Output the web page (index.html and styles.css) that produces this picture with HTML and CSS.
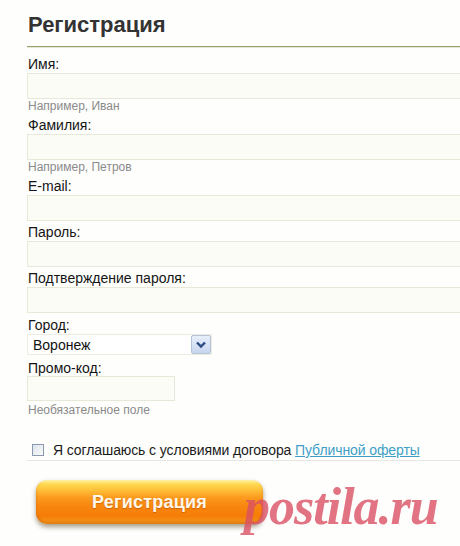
FILE: index.html
```html
<!DOCTYPE html>
<html lang="ru">
<head>
<meta charset="utf-8">
<title>Регистрация</title>
<link rel="stylesheet" href="styles.css">
</head>
<body>
<div class="page">
  <h1 class="title">Регистрация</h1>
  <form class="form">
    <label class="label">Имя:</label>
    <div class="input"></div>
    <div class="hint">Например, Иван</div>

    <label class="label">Фамилия:</label>
    <div class="input"></div>
    <div class="hint">Например, Петров</div>

    <label class="label">E-mail:</label>
    <div class="input input-gap"></div>

    <label class="label">Пароль:</label>
    <div class="input input-gap"></div>

    <label class="label">Подтверждение пароля:</label>
    <div class="input input-gap"></div>

    <label class="label label-city">Город:</label>
    <div class="select">
      <span class="select-value">Воронеж</span>
      <span class="select-btn">
        <svg width="12" height="8" viewBox="0 0 12 8"><path d="M2 1.5 L6 5.5 L10 1.5" fill="none" stroke="#2c4a86" stroke-width="2.4"/></svg>
      </span>
    </div>

    <label class="label label-promo">Промо-код:</label>
    <div class="input input-short"></div>
    <div class="hint hint-promo">Необязательное поле</div>

    <div class="agree">
      <span class="checkbox"></span>
      <span class="agree-text">Я соглашаюсь с условиями договора <a class="link" href="#">Публичной оферты</a></span>
    </div>

    <div class="submit-row">
      <div class="submit">Регистрация</div>
    </div>
  </form>
  <div class="watermark">postila.ru</div>
</div>
</body>
</html>
```
FILE: styles.css
```css
html, body {
  margin: 0;
  padding: 0;
  background: #fefefd;
}
body {
  width: 460px;
  height: 546px;
  overflow: hidden;
  font-family: "Liberation Sans", Arial, sans-serif;
  color: #1a1a1a;
}
.page {
  position: relative;
  padding-left: 27px;
  height: 546px;
  overflow: hidden;
}
.title {
  box-sizing: border-box;
  width: 433px;
  margin: 0;
  padding: 12px 0 8px 1px;
  font-size: 22px;
  line-height: 26px;
  font-weight: bold;
  color: #333;
  border-bottom: 1px solid #98a070;
  box-shadow: 0 1px 0 #e6e8d6;
}
.form {
  display: flex;
  flex-direction: column;
  align-items: flex-start;
  padding-top: 9px;
}
.label {
  display: block;
  font-size: 14px;
  line-height: 16px;
  padding-left: 1px;
  color: #141414;
  margin-bottom: 1px;
}
.input {
  box-sizing: border-box;
  width: 434px;
  height: 26px;
  border: 1px solid #e8e8d8;
  background: #fcfcf6;
}
.input-gap {
  margin-bottom: 3px;
}
.input-short {
  width: 148px;
  height: 25px;
}
.hint {
  font-size: 12px;
  line-height: 14px;
  color: #8a8a8a;
  padding-left: 1px;
  margin-bottom: 4px;
}
.hint-promo {
  margin-top: 2px;
  margin-bottom: 0;
}
.label-city {
  margin-top: 1px;
  margin-bottom: 1px;
}
.select {
  box-sizing: border-box;
  width: 185px;
  height: 21px;
  border: 1px solid #ececdf;
  background: #fff;
  display: flex;
  align-items: center;
  justify-content: space-between;
  margin-bottom: 5px;
}
.select-value {
  font-size: 14px;
  padding-left: 5px;
  color: #111;
}
.select-btn {
  box-sizing: border-box;
  width: 20px;
  height: 19px;
  border: 1px solid #b4c2da;
  border-radius: 2px;
  background: linear-gradient(#e8effa, #c6d5ee);
  display: flex;
  align-items: center;
  justify-content: center;
}
.label-promo {
  margin-bottom: 0;
}
.agree {
  box-sizing: border-box;
  display: flex;
  align-items: center;
  margin-top: 25px;
  padding: 0 0 2px 5px;
  border-bottom: 1px solid #e6e6e2;
  width: 433px;
  height: 19px;
}
.checkbox {
  box-sizing: border-box;
  width: 12px;
  height: 12px;
  border: 1px solid #8a9ab0;
  background: linear-gradient(135deg, #dde3ea, #fafbfc);
  margin-right: 9px;
}
.agree-text {
  font-size: 14px;
  line-height: 16px;
  color: #1a1a1a;
  letter-spacing: -0.1px;
}
.link {
  color: #3e9ec6;
  text-decoration: underline;
}
.submit-row {
  padding: 19px 0 0 9px;
}
.submit {
  width: 227px;
  height: 44px;
  border-radius: 11px;
  background: linear-gradient(#fff3a8 0%, #ffd84e 10%, #ffc23a 22%, #fb9a1e 40%, #f8860e 60%, #f57d08 82%, #f79c1e 100%);
  box-shadow: 0 3px 5px rgba(60, 40, 0, 0.45), inset 0 -2px 3px rgba(180, 80, 0, 0.4);
  color: #fff8ea;
  font-size: 18px;
  font-weight: bold;
  display: flex;
  align-items: center;
  justify-content: center;
  text-shadow: 0 1px 1px rgba(160, 70, 0, 0.5);
  letter-spacing: 0.2px;
}
.watermark {
  position: absolute;
  left: 244px;
  top: 477px;
  font-family: "Liberation Serif", "Times New Roman", serif;
  font-style: italic;
  font-weight: bold;
  font-size: 52px;
  line-height: 60px;
  letter-spacing: -1px;
  color: rgba(218, 80, 100, 0.8);
}
```
